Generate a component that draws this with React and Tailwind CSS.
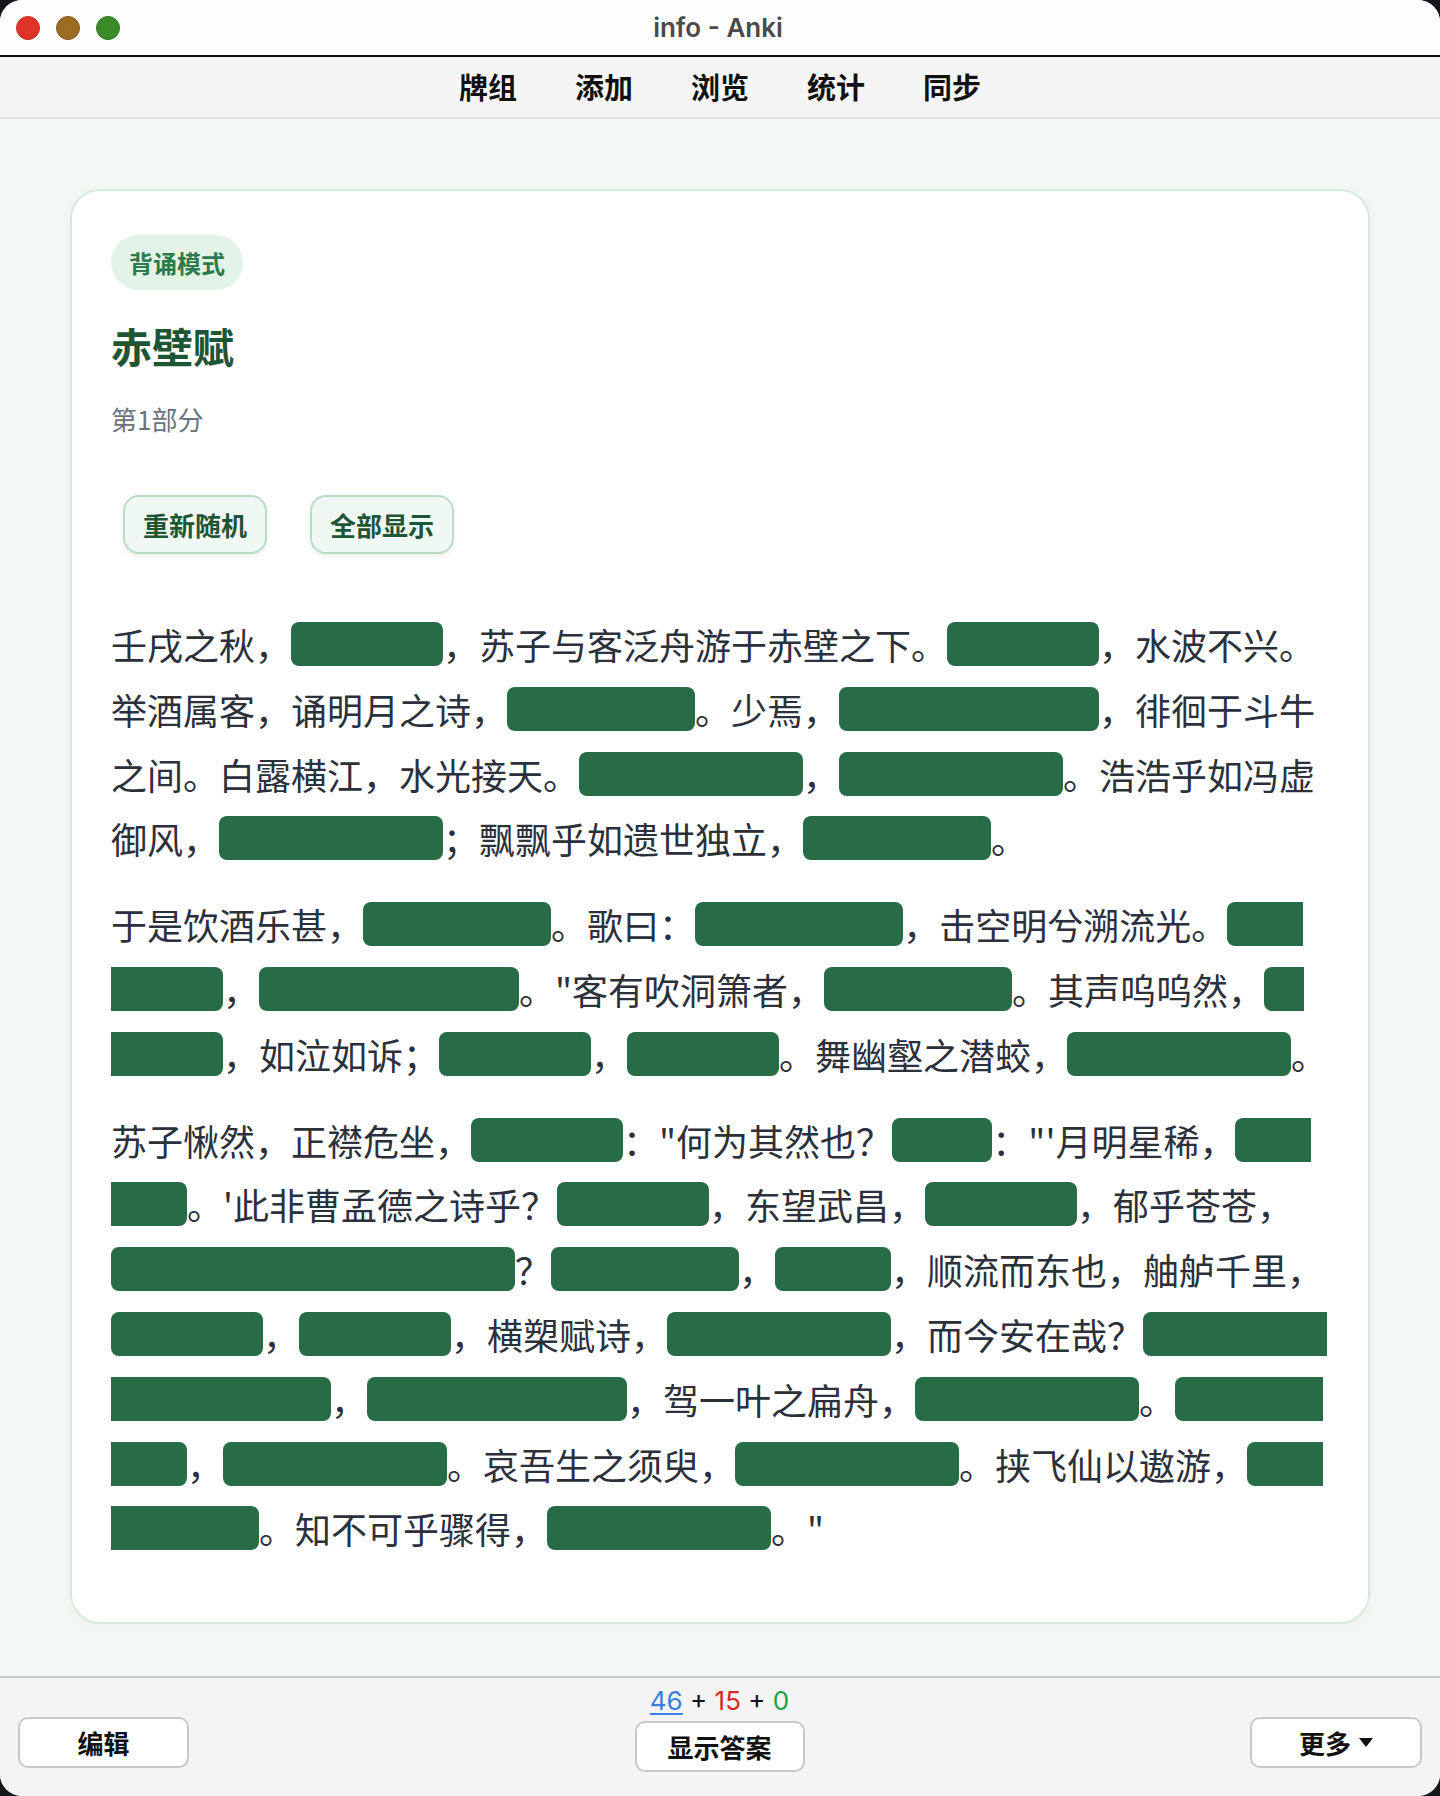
const PARAS = [
  `壬戌之秋，[七月既望]，苏子与客泛舟游于赤壁之下。[清风徐来]，水波不兴。举酒属客，诵明月之诗，[歌窈窕之章]。少焉，[月出于东山之上]，徘徊于斗牛之间。白露横江，水光接天。[纵一苇之所如]，[凌万顷之茫然]。浩浩乎如冯虚御风，[而不知其所止]；飘飘乎如遗世独立，[羽化而登仙]。`,
  `于是饮酒乐甚，[扣舷而歌之]。歌曰：["桂棹兮兰桨]，击空明兮溯流光。[渺渺兮予怀]，[望美人兮天一方]。"客有吹洞箫者，[倚歌而和之]。其声呜呜然，[如怨如慕]，如泣如诉；[余音袅袅]，[不绝如缕]。舞幽壑之潜蛟，[泣孤舟之嫠妇]。`,
  `苏子愀然，正襟危坐，[而问客曰]："何为其然也？["客曰]："'月明星稀，[乌鹊南飞]。'此非曹孟德之诗乎？[西望夏口]，东望武昌，[山川相缪]，郁乎苍苍，[此非孟德之困于周郎者乎]？[方其破荆州]，[下江陵]，顺流而东也，舳舻千里，[旌旗蔽空]，[酾酒临江]，横槊赋诗，[固一世之雄也]，而今安在哉？[况吾与子渔樵于江渚之上]，[侣鱼虾而友麋鹿]，驾一叶之扁舟，[举匏樽以相属]。[寄蜉蝣于天地]，[渺沧海之一粟]。哀吾生之须臾，[羡长江之无穷]。挟飞仙以遨游，[抱明月而长终]。知不可乎骤得，[托遗响于悲风]。"`,
];

/* ── Cloze paragraph: [..] becomes a hidden green block ── */
function Passage({ text }) {
  const parts = text.split(/(\[[^\]]+\])/).filter(Boolean);
  return (
    <p className="mb-[21px] last:mb-0 text-[36px] leading-[1.8] text-[#2b303b]">
      {parts.map((p, i) =>
        p.startsWith('[') ? (
          <span
            key={i}
            className="relative -top-[3px] rounded-[8px] bg-[#276b47] px-[4px] text-[30px] tracking-[6px] text-transparent select-none"
          >
            {p.slice(1, -1)}
          </span>
        ) : (
          <span key={i}>{p}</span>
        )
      )}
    </p>
  );
}

const NAV = ['牌组', '添加', '浏览', '统计', '同步'];

export default function App() {
  return (
    <div className="w-[1440px] h-[1796px] bg-[#14161a] font-['Noto_Sans_CJK_SC',sans-serif]">
      <div className="w-full h-full rounded-[22px] overflow-hidden flex flex-col bg-white">

        {/* ── Title bar ── */}
        <div className="h-[57px] shrink-0 grid grid-cols-[1fr_auto_1fr] items-center border-b-2 border-[#111] bg-[#fdfdfd]">
          <div className="flex items-center gap-[16px] pl-[16px]">
            <span className="w-[24px] h-[24px] rounded-full bg-[#de3328] border border-[#c32a20]" />
            <span className="w-[24px] h-[24px] rounded-full bg-[#9b6d24] border border-[#82591a]" />
            <span className="w-[24px] h-[24px] rounded-full bg-[#3d8a29] border border-[#2f7420]" />
          </div>
          <div className="font-[Inter,sans-serif] font-semibold text-[26px] text-[#4a4a4a] -ml-[4px]">
            info - Anki
          </div>
          <div />
        </div>

        {/* ── Toolbar ── */}
        <div className="h-[62px] shrink-0 flex items-center justify-center gap-[58px] bg-[#f5f5f5] border-b-2 border-[#e2e2e2]">
          {NAV.map(n => (
            <span key={n} className="text-[29px] font-bold text-[#111] leading-none -mt-[2px]">
              {n}
            </span>
          ))}
        </div>

        {/* ── Review area ── */}
        <div className="flex-1 bg-[#f2f8f4] pt-[70px] px-[70px]">
          <div className="rounded-[30px] border-2 border-[#d6ebdd] bg-white pt-[44px] pl-[39px] pr-[40px] pb-[61px] shadow-[0_2px_10px_rgba(0,0,0,0.03)]">
            <div className="inline-flex items-center h-[55px] px-[18px] rounded-full bg-[#e2f3e7] text-[24px] font-bold text-[#2d7a4c]">
              背诵模式
            </div>
            <h1 className="mt-[31px] text-[41px] leading-[48px] font-bold text-[#1e5535]">赤壁赋</h1>
            <div className="mt-[30px] text-[26px] leading-[39px] text-[#6b7280]">第1部分</div>

            <div className="mt-[57px] ml-[12px] flex gap-[43px]">
              <button className="w-[144px] h-[59px] rounded-[16px] border-2 border-[#b9dcc5] bg-[#f0f8f3] text-[26px] font-bold text-[#1e5535] shadow-[0_2px_5px_rgba(0,0,0,0.08)]">
                重新随机
              </button>
              <button className="w-[144px] h-[59px] rounded-[16px] border-2 border-[#b9dcc5] bg-[#f0f8f3] text-[26px] font-bold text-[#1e5535] shadow-[0_2px_5px_rgba(0,0,0,0.08)]">
                全部显示
              </button>
            </div>

            <div className="mt-[58px]">
              {PARAS.map((t, i) => (
                <Passage key={i} text={t} />
              ))}
            </div>
          </div>
        </div>

        {/* ── Bottom bar ── */}
        <div className="h-[120px] shrink-0 border-t-2 border-[#c9c9c9] bg-[#f4f4f4] flex items-end justify-between px-[18px] pb-[24px]">
          <button className="mb-[4px] w-[171px] h-[51px] rounded-[10px] border-2 border-[#c8c8c8] bg-white text-[26px] font-semibold text-[#111]">
            编辑
          </button>
          <div className="flex flex-col items-center">
            <div className="font-[Inter,sans-serif] text-[26px] leading-[30px] text-[#111]">
              <span className="text-[#3b7fe0] underline underline-offset-[3px]">46</span>
              {' + '}
              <span className="text-[#dc2626]">15</span>
              {' + '}
              <span className="text-[#16a34a]">0</span>
            </div>
            <button className="mt-[5px] w-[170px] h-[51px] rounded-[10px] border-2 border-[#c8c8c8] bg-white text-[26px] font-semibold text-[#111]">
              显示答案
            </button>
          </div>
          <button className="mb-[4px] w-[172px] h-[51px] rounded-[10px] border-2 border-[#c8c8c8] bg-white text-[26px] font-semibold text-[#111] flex items-center justify-center gap-[8px]">
            更多
            <svg width="14" height="9" viewBox="0 0 14 9">
              <polygon points="0,0 14,0 7,9" fill="#111" />
            </svg>
          </button>
        </div>
      </div>
    </div>
  );
}
